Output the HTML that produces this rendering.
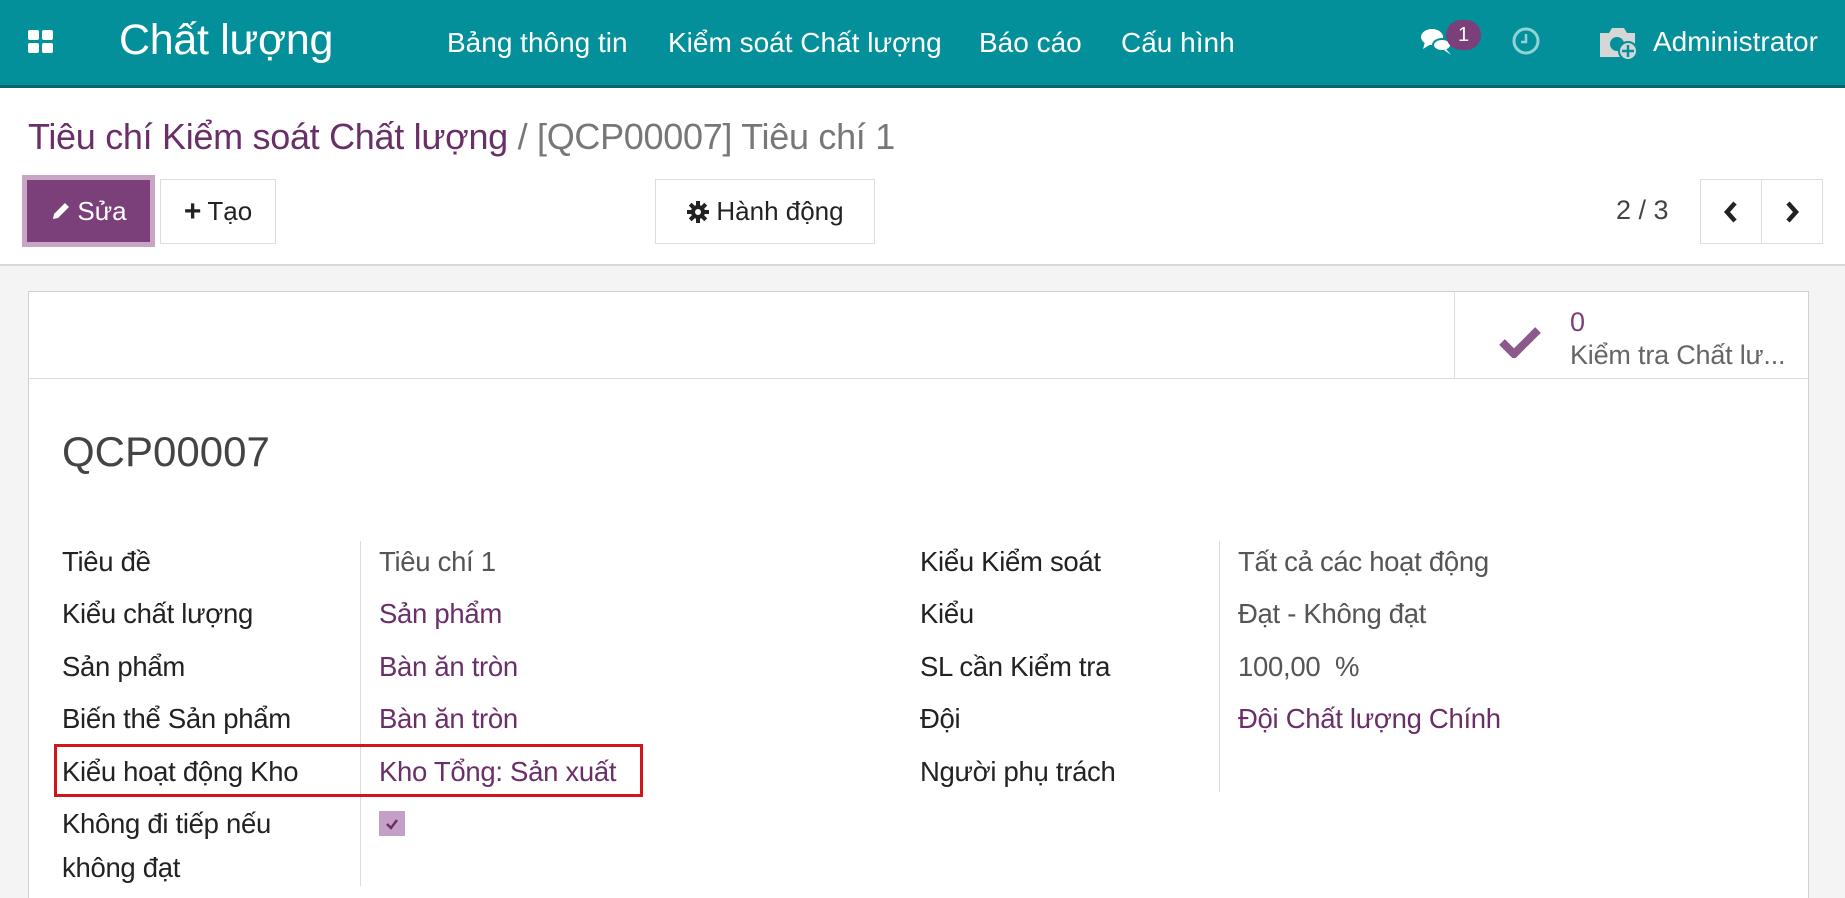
<!DOCTYPE html>
<html><head><meta charset="utf-8"><style>
*{box-sizing:border-box;margin:0;padding:0}
html{width:1845px;height:898px;overflow:hidden}
body{width:1845px;height:898px;overflow:hidden;font-family:"Liberation Sans",sans-serif;background:#f4f4f4;position:relative;color:#4c4c4c}
.a{position:absolute;white-space:nowrap}
.nav{position:absolute;left:0;top:0;width:1845px;height:88px;background:#03909a;border-bottom:3px solid #04676e}
.nav .a{color:#fff}
.cp{position:absolute;left:0;top:88px;width:1845px;height:178px;background:#fff;border-bottom:2px solid #d8d8d8}
.btn{position:absolute;border:1px solid #ddd;background:#fff;color:#222;font-size:26px;display:flex;align-items:center;justify-content:center}
.sheet{position:absolute;left:28px;top:291px;width:1781px;height:607px;background:#fff;border:1px solid #d0d0d0;border-bottom:none}
.f{font-size:27.5px;letter-spacing:-0.3px}
.l{color:#222}
.v{color:#555}
.p{color:#6a2f68}
.vl{position:absolute;width:1px;background:#ddd}
</style></head><body>
<div class="nav">
 <svg class="a" style="left:28px;top:30px" width="26" height="24" viewBox="0 0 26 24"><rect x="0" y="0" width="11" height="10" rx="2" fill="#fff"/><rect x="14" y="0" width="11" height="10" rx="2" fill="#fff"/><rect x="0" y="13" width="11" height="10" rx="2" fill="#fff"/><rect x="14" y="13" width="11" height="10" rx="2" fill="#fff"/></svg>
 <div class="a" style="left:119px;top:16px;font-size:43px;letter-spacing:-0.3px">Chất lượng</div>
 <div class="a" style="left:447px;top:27px;font-size:28px">Bảng thông tin</div>
 <div class="a" style="left:668px;top:27px;font-size:28px">Kiểm soát Chất lượng</div>
 <div class="a" style="left:979px;top:27px;font-size:28px">Báo cáo</div>
 <div class="a" style="left:1121px;top:27px;font-size:28px">Cấu hình</div>
 <svg class="a" style="left:1420px;top:26px" width="34" height="30" viewBox="0 0 34 30"><ellipse cx="12" cy="11" rx="11" ry="8" fill="#fff"/><path d="M5 16 L3 23 L11 18Z" fill="#fff"/><ellipse cx="22" cy="19" rx="9" ry="6" fill="#fff" stroke="#03909a" stroke-width="2"/><path d="M26 23 L31 29 L24 24Z" fill="#fff"/></svg>
 <div class="a" style="left:1446px;top:20px;width:35px;height:30px;border-radius:15px;background:#7b3f7a;color:#fff;font-size:20px;text-align:center;line-height:30px">1</div>
 <svg class="a" style="left:1511px;top:26px" width="30" height="30" viewBox="0 0 30 30"><circle cx="15" cy="15" r="12" fill="none" stroke="#8fd3d8" stroke-width="3"/><path d="M15 8V16H10" fill="none" stroke="#8fd3d8" stroke-width="2.5"/></svg>
 <svg class="a" style="left:1598px;top:24px" width="42" height="38" viewBox="0 0 42 38"><path d="M2 9h9l3-5h12l3 5h8v24H2Z" fill="#d6d6d6"/><circle cx="19" cy="20" r="7" fill="#03909a"/><circle cx="30" cy="27" r="9" fill="#d6d6d6" stroke="#03909a" stroke-width="2"/><path d="M30 21v12M24 27h12" stroke="#03909a" stroke-width="2.5"/></svg>
 <div class="a" style="left:1653px;top:26px;font-size:28px">Administrator</div>
</div>
<div class="cp">
 <div class="a" style="left:28px;top:28px;font-size:36px;letter-spacing:-0.3px"><span style="color:#6a2f68">Tiêu chí Kiểm soát Chất lượng</span><span style="color:#777"> / [QCP00007] Tiêu chí 1</span></div>
 <div class="btn" style="left:22px;top:87px;width:133px;height:72px;background:#7b3f7a;color:#fff;border:5px solid #c9a5c5">
  <svg width="22" height="22" viewBox="0 0 22 22" style="margin-right:5px"><path d="M3 19l1-5 11-11 4 4-11 11z" fill="#fff"/></svg>Sửa</div>
 <div class="btn" style="left:160px;top:91px;width:116px;height:65px"><span style="font-weight:bold;font-size:30px;margin-right:6px;line-height:1">+</span>Tạo</div>
 <div class="btn" style="left:655px;top:91px;width:220px;height:65px"><svg width="24" height="24" viewBox="0 0 24 24" style="margin-right:6px"><g fill="#222"><circle cx="12" cy="12" r="7"/><rect x="10" y="1" width="4" height="22"/><rect x="1" y="10" width="22" height="4"/><rect x="10" y="1" width="4" height="22" transform="rotate(45 12 12)"/><rect x="10" y="1" width="4" height="22" transform="rotate(-45 12 12)"/></g><circle cx="12" cy="12" r="3" fill="#fff"/></svg>Hành động</div>
 <div class="a" style="left:1616px;top:107px;font-size:27px;color:#444">2 / 3</div>
 <div class="btn" style="left:1700px;top:91px;width:62px;height:65px"><svg width="18" height="24" viewBox="0 0 18 24"><path d="M13 3L5 12l8 9" fill="none" stroke="#222" stroke-width="4.5"/></svg></div>
 <div class="btn" style="left:1761px;top:91px;width:62px;height:65px"><svg width="18" height="24" viewBox="0 0 18 24"><path d="M5 3l8 9-8 9" fill="none" stroke="#222" stroke-width="4.5"/></svg></div>
</div>
<div class="sheet">
 <div style="position:absolute;left:0;top:86px;width:100%;height:1px;background:#ddd"></div>
 <div class="vl" style="left:1425px;top:0;height:86px"></div>
 <svg class="a" style="left:1470px;top:34px" width="42" height="32" viewBox="0 0 42 32"><path d="M3 16l12 12L39 4" fill="none" stroke="#8b5a8b" stroke-width="8"/></svg>
 <div class="a" style="left:1541px;top:15px;font-size:27px;color:#7b3f7a">0</div>
 <div class="a" style="left:1541px;top:48px;font-size:27px;color:#666;letter-spacing:-0.2px">Kiểm tra Chất lư...</div>
 <div class="a" style="left:33px;top:136px;font-size:42px;color:#444">QCP00007</div>
 <div class="vl" style="left:331px;top:249px;height:345px"></div>
 <div class="vl" style="left:1190px;top:249px;height:251px"></div>
 <div class="a f l" style="left:33px;top:254px">Tiêu đề</div>
 <div class="a f l" style="left:33px;top:306px">Kiểu chất lượng</div>
 <div class="a f l" style="left:33px;top:359px">Sản phẩm</div>
 <div class="a f l" style="left:33px;top:411px">Biến thể Sản phẩm</div>
 <div class="a f l" style="left:33px;top:464px">Kiểu hoạt động Kho</div>
 <div class="a f l" style="left:33px;top:516px">Không đi tiếp nếu</div>
 <div class="a f l" style="left:33px;top:560px">không đạt</div>
 <div class="a f v" style="left:350px;top:254px">Tiêu chí 1</div>
 <div class="a f p" style="left:350px;top:306px">Sản phẩm</div>
 <div class="a f p" style="left:350px;top:359px">Bàn ăn tròn</div>
 <div class="a f p" style="left:350px;top:411px">Bàn ăn tròn</div>
 <div class="a f p" style="left:350px;top:464px">Kho Tổng: Sản xuất</div>
 <div class="a" style="left:350px;top:519px;width:26px;height:25px;background:#c5a0c6"><svg width="26" height="25" viewBox="0 0 26 25"><path d="M8 13l4 4 6-8" fill="none" stroke="#6a2f68" stroke-width="2.5"/></svg></div>
 <div style="position:absolute;left:25px;top:452px;width:589px;height:53px;border:3px solid #d3141b"></div>
 <div class="a f l" style="left:891px;top:254px">Kiểu Kiểm soát</div>
 <div class="a f l" style="left:891px;top:306px">Kiểu</div>
 <div class="a f l" style="left:891px;top:359px">SL cần Kiểm tra</div>
 <div class="a f l" style="left:891px;top:411px">Đội</div>
 <div class="a f l" style="left:891px;top:464px">Người phụ trách</div>
 <div class="a f v" style="left:1209px;top:254px">Tất cả các hoạt động</div>
 <div class="a f v" style="left:1209px;top:306px">Đạt - Không đạt</div>
 <div class="a f v" style="left:1209px;top:359px">100,00 &nbsp;%</div>
 <div class="a f p" style="left:1209px;top:411px">Đội Chất lượng Chính</div>
</div>
</body></html>
